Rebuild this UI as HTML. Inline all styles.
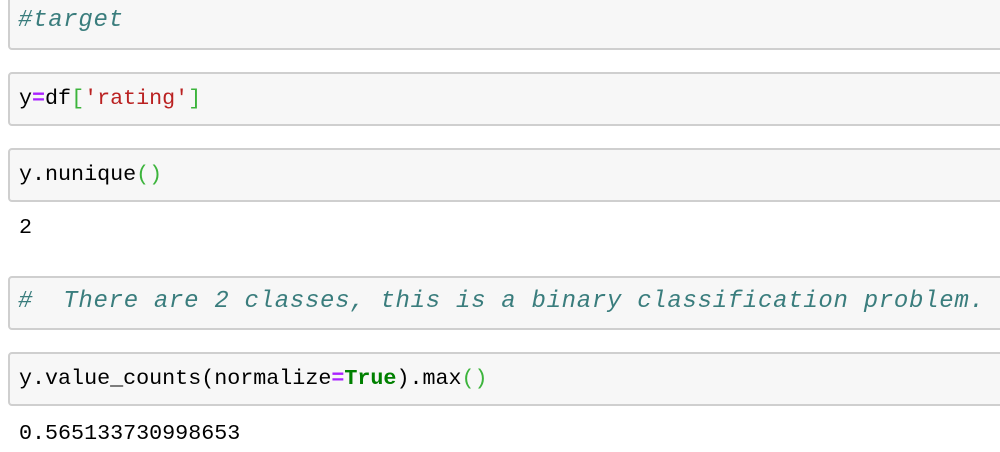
<!DOCTYPE html>
<html><head><meta charset="utf-8"><style>
html,body{margin:0;padding:0;background:#fff;width:1000px;height:452px;overflow:hidden}
.c{position:absolute;left:8px;width:1000px;background:#f7f7f7;border:2px solid #cfcfcf;border-radius:4px;box-sizing:border-box}
.t{position:absolute;left:19px;font-family:"Liberation Mono",monospace;font-size:21.7px;color:#000;white-space:pre;line-height:26px}
.cm{color:#3a7d7d;font-style:italic;font-size:24px;letter-spacing:0.7px;left:18px}
.s{color:#ba2121}
.g{color:#3cb43c}
.o{color:#aa22ff;font-weight:bold}
.k{color:#008000;font-weight:bold}
</style></head><body>
<div class="c" style="top:-6px;height:56px"></div>
<div class="t cm" style="top:8px">#target</div>
<div class="c" style="top:72px;height:54px"></div>
<div class="t" style="top:86px">y<span class="o">=</span>df<span class="g">[</span><span class="s">'rating'</span><span class="g">]</span></div>
<div class="c" style="top:148px;height:54px"></div>
<div class="t" style="top:162px">y.nunique<span class="g">()</span></div>
<div class="t" style="top:215px">2</div>
<div class="c" style="top:276px;height:54px"></div>
<div class="t cm" style="top:289px">#  There are 2 classes, this is a binary classification problem.</div>
<div class="c" style="top:352px;height:54px"></div>
<div class="t" style="top:366px">y.value_counts(normalize<span class="o">=</span><span class="k">True</span>).max<span class="g">()</span></div>
<div class="t" style="top:421px">0.565133730998653</div>
</body></html>
